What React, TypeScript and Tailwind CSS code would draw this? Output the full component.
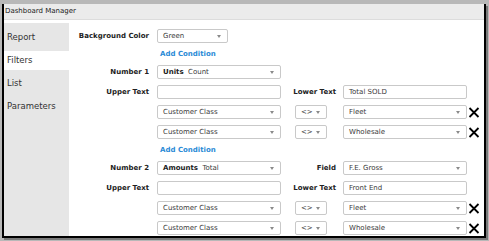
import React from "react";

const Arrow = () => (
  <span className="ml-auto mr-[6px] h-0 w-0 border-x-[2.5px] border-t-[3px] border-x-transparent border-t-[#8a8a8a]" />
);

const Select = ({ children, w = "w-[124px]" }: { children: React.ReactNode; w?: string }) => (
  <div className={`${w} h-[14px] flex items-center rounded-[2px] border border-[#c9c9c9] bg-white pl-[5px] text-[7px] text-[#3a3a3a]`}>
    <span className="whitespace-nowrap">{children}</span>
    <Arrow />
  </div>
);

const Input = ({ value = "" }: { value?: string }) => (
  <div className="w-[124px] h-[14px] flex items-center rounded-[2px] border border-[#c9c9c9] bg-white pl-[5px] text-[7px] text-[#3a3a3a]">
    {value}
  </div>
);

const Label = ({ text, w = "w-[80px]" }: { text: string; w?: string }) => (
  <div className={`${w} shrink-0 text-right text-[7px] font-bold text-[#222] whitespace-nowrap`}>{text}</div>
);

const Close = () => (
  <svg width="12" height="11" viewBox="0 0 12 11" className="ml-[1px]">
    <path d="M1.5 1 L10.5 10 M10.5 1 L1.5 10" stroke="#000" strokeWidth="1.8" />
  </svg>
);

const AddCondition = () => (
  <div className="h-[16px] flex items-start pt-[3px] pl-[91px] text-[7px] font-bold text-[#2a8ad6]">
    Add Condition
  </div>
);

const ConditionRow = ({ value }: { value: string }) => (
  <div className="h-[20px] flex items-center">
    <div className="w-[80px]" />
    <div className="ml-[8px]">
      <Select>Customer Class</Select>
    </div>
    <div className="ml-[14px]">
      <Select w="w-[32px]">&lt;&gt;</Select>
    </div>
    <div className="ml-[16px]">
      <Select>{value}</Select>
    </div>
    <Close />
  </div>
);

const TextRow = ({ lower }: { lower: string }) => (
  <div className="h-[20px] flex items-center">
    <Label text="Upper Text" />
    <div className="ml-[8px]">
      <Input />
    </div>
    <Label text="Lower Text" w="w-[55px]" />
    <div className="ml-[7px]">
      <Input value={lower} />
    </div>
  </div>
);

const sideItems = ["Report", "Filters", "List", "Parameters"];

export default function App() {
  return (
    <div
      className="w-[489px] h-[241px] bg-[#b8b8b8] pt-[4px] pl-[2px] overflow-hidden"
      style={{ fontFamily: '"DejaVu Sans", Verdana, sans-serif' }}
    >
      <div className="w-[484px] h-[234px] border-x-2 border-b-2 border-black bg-white shadow-[2px_2px_0_#7a7a7a] flex flex-col overflow-hidden">
        <div className="h-[16px] shrink-0 bg-[#ebebeb] border-b border-[#dcdcdc] flex items-center pl-[1px] text-[7px] text-[#222]">
          Dashboard Manager
        </div>
        <div className="flex flex-1">
          <div className="w-[65px] shrink-0 bg-[#e6e6e6] mt-[3px] pt-[3px]">
            {sideItems.map((s) => (
              <div key={s} className="h-[23px] flex items-center">
                <div
                  className={`w-full flex items-center pl-[3px] text-[8.5px] text-[#333] ${
                    s === "Filters" ? "h-[19px] bg-white" : "h-[23px]"
                  }`}
                >
                  {s}
                </div>
              </div>
            ))}
          </div>
          <div className="flex-1 pt-[6px]">
            <div className="h-[20px] flex items-center">
              <Label text="Background Color" />
              <div className="ml-[8px]">
                <Select w="w-[71px]">Green</Select>
              </div>
            </div>
            <AddCondition />
            <div className="h-[20px] flex items-center">
              <Label text="Number 1" />
              <div className="ml-[8px]">
                <Select>
                  <b className="text-[#222]">Units</b>&nbsp; Count
                </Select>
              </div>
            </div>
            <TextRow lower="Total SOLD" />
            <ConditionRow value="Fleet" />
            <ConditionRow value="Wholesale" />
            <AddCondition />
            <div className="h-[20px] flex items-center">
              <Label text="Number 2" />
              <div className="ml-[8px]">
                <Select>
                  <b className="text-[#222]">Amounts</b>&nbsp; Total
                </Select>
              </div>
              <Label text="Field" w="w-[55px]" />
              <div className="ml-[7px]">
                <Select>F.E. Gross</Select>
              </div>
            </div>
            <TextRow lower="Front End" />
            <ConditionRow value="Fleet" />
            <ConditionRow value="Wholesale" />
          </div>
        </div>
      </div>
    </div>
  );
}
